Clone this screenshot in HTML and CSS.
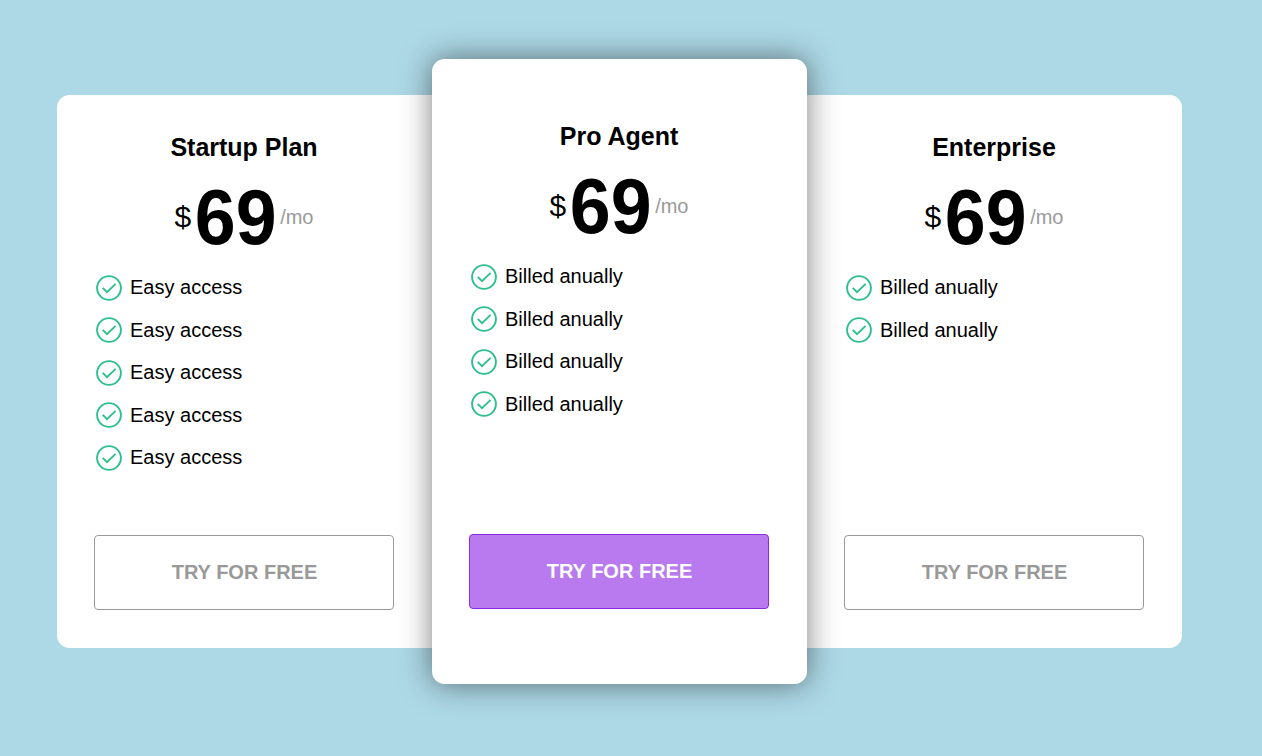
FILE: index.html
```html
<!DOCTYPE html>
<html lang="en">
<head>
<meta charset="utf-8">
<title>Pricing plans</title>
<link rel="stylesheet" href="styles.css">
</head>
<body>
<svg width="0" height="0" class="defs">
  <symbol id="check" viewBox="0 0 30 30">
    <circle cx="15" cy="15" r="11.9"/>
    <path d="M8.7 14.8L13 19.1L21.6 10.9"/>
  </symbol>
</svg>
<main class="plans">
  <section class="card card-left">
    <h2 class="title">Startup Plan</h2>
    <div class="price"><span class="currency">$</span><strong class="amount">69</strong><span class="period">/mo</span></div>
    <ul class="features">
      <li><svg class="icon"><use href="#check"/></svg><span>Easy access</span></li>
      <li><svg class="icon"><use href="#check"/></svg><span>Easy access</span></li>
      <li><svg class="icon"><use href="#check"/></svg><span>Easy access</span></li>
      <li><svg class="icon"><use href="#check"/></svg><span>Easy access</span></li>
      <li><svg class="icon"><use href="#check"/></svg><span>Easy access</span></li>
    </ul>
    <button class="button">TRY FOR FREE</button>
  </section>
  <section class="card card-featured">
    <h2 class="title">Pro Agent</h2>
    <div class="price"><span class="currency">$</span><strong class="amount">69</strong><span class="period">/mo</span></div>
    <ul class="features">
      <li><svg class="icon"><use href="#check"/></svg><span>Billed anually</span></li>
      <li><svg class="icon"><use href="#check"/></svg><span>Billed anually</span></li>
      <li><svg class="icon"><use href="#check"/></svg><span>Billed anually</span></li>
      <li><svg class="icon"><use href="#check"/></svg><span>Billed anually</span></li>
    </ul>
    <button class="button button-primary">TRY FOR FREE</button>
  </section>
  <section class="card card-right">
    <h2 class="title">Enterprise</h2>
    <div class="price"><span class="currency">$</span><strong class="amount">69</strong><span class="period">/mo</span></div>
    <ul class="features">
      <li><svg class="icon"><use href="#check"/></svg><span>Billed anually</span></li>
      <li><svg class="icon"><use href="#check"/></svg><span>Billed anually</span></li>
    </ul>
    <button class="button">TRY FOR FREE</button>
  </section>
</main>
</body>
</html>
```
FILE: styles.css
```css
* {
  box-sizing: border-box;
}

body {
  margin: 0;
  min-height: 756px;
  background: #add8e6;
  font-family: "Liberation Sans", Arial, sans-serif;
  font-size: 20px;
  color: #000;
}

.defs {
  position: absolute;
}

.plans {
  display: flex;
  align-items: center;
  padding: 59px 0 0 57px;
}

.card {
  display: flex;
  flex-direction: column;
  width: 375px;
  height: 553px;
  padding: 38px 38px 38px 37px;
  background: #fff;
}

.card-left {
  border-radius: 12.5px 0 0 12.5px;
}

.card-right {
  border-radius: 0 12.5px 12.5px 0;
}

.card-featured {
  position: relative;
  z-index: 1;
  height: 625px;
  padding-top: 63px;
  padding-bottom: 75px;
  border-radius: 12.5px;
  box-shadow: 0 0 31.25px rgba(0, 0, 0, 0.5);
}

.title {
  margin: 0;
  font-size: 25px;
  line-height: 29px;
  text-align: center;
}

.price {
  display: flex;
  align-items: center;
  justify-content: center;
  gap: 2.75px;
  height: 86px;
  margin-top: 12px;
}

.currency {
  font-size: 30px;
}

.amount {
  font-size: 75px;
  line-height: 86px;
  transform: scale(0.98, 1.04);
}

.period {
  color: #999;
}

.features {
  list-style: none;
  margin: 6.5px 0 0;
  padding: 0;
}

.features li {
  display: flex;
  align-items: center;
  gap: 6px;
  height: 42.5px;
}

.icon {
  width: 30px;
  height: 30px;
  fill: none;
  stroke: #2ec08b;
  stroke-width: 1.9;
}

.button {
  height: 75px;
  width: 300px;
  margin-top: auto;
  padding: 0 0 0 1px;
  flex: none;
  border: 1px solid #999;
  border-radius: 4px;
  background: #fff;
  font: bold 20px "Liberation Sans", Arial, sans-serif;
  color: #999;
}

.button-primary {
  border-color: #8a2be2;
  background: #b87aee;
  color: #fff;
}
```
